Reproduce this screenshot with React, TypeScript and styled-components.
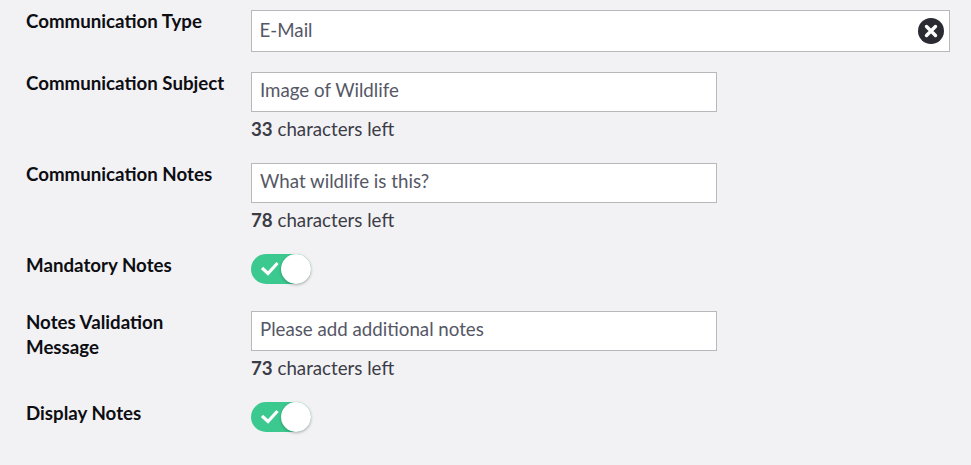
import * as React from 'react'
import styled, { createGlobalStyle } from 'styled-components'

const GlobalStyle = createGlobalStyle`
    html, body {
        margin: 0;
        padding: 0;
        background: #f2f2f5;
        font-family: Lato, "Open Sans", sans-serif;
    }
`;

const Form = styled.div`
    display: flex;
    flex-direction: column;
    gap: 20px;
    padding: 10px 21px 0 26px;
`;

const Row = styled.div`
    display: grid;
    grid-template-columns: 225px 1fr;
`;

const Label = styled.label`
    display: block;
    margin-top: -1px;
    font-size: 18.72px;
    line-height: 25px;
    font-weight: 700;
    color: #0d0d12;
`;

const SelectBox = styled.div`
    display: flex;
    align-items: center;
    justify-content: space-between;
    box-sizing: border-box;
    height: 42px;
    padding: 0 5px 2px 7.5px;
    border: 1px solid #b8b8bb;
    background: #fff;
    font-size: 18.72px;
    color: #555766;
`;

const ClearButton = styled.button`
    display: flex;
    margin-bottom: -2px;
    padding: 0;
    border: none;
    background: none;
`;

const TextInput = styled.input`
    display: block;
    box-sizing: border-box;
    width: 466px;
    height: 40px;
    padding: 0 8px 5px;
    border: 1px solid #b8b8bb;
    background: #fff;
    font-family: inherit;
    font-size: 18.72px;
    color: #555766;
    outline: none;
`;

const Hint = styled.div`
    height: 31px;
    font-size: 18.72px;
    line-height: 34px;
    color: #3c3c46;

    b {
        font-weight: 700;
    }
`;

const ToggleRow = styled.div`
    height: 37px;
`;

const Toggle = styled.div`
    position: relative;
    width: 60px;
    height: 30px;
    border-radius: 15px;
    background: #3cc98f;
`;

const Knob = styled.span`
    position: absolute;
    top: 0;
    right: 0;
    width: 30px;
    height: 30px;
    border-radius: 50%;
    background: #fff;
    box-shadow: 0 1px 3px rgba(0, 0, 0, 0.3);
`;

const Check = styled.svg`
    position: absolute;
    top: 7px;
    left: 10px;
    width: 18px;
    height: 15px;
`;

const Switch: React.FC = () => (
    <Toggle>
        <Check viewBox="0 0 18 15">
            <path d="M1 7 L7 12.5 L16.5 2" fill="none" stroke="#fff" strokeWidth="3.2" />
        </Check>
        <Knob />
    </Toggle>
);

const Field: React.FC<{ label: React.ReactNode; value: string; left: number }> = ({ label, value, left }) => (
    <Row>
        <Label>{label}</Label>
        <div>
            <TextInput readOnly value={value} />
            <Hint><b>{left}</b> characters left</Hint>
        </div>
    </Row>
);

export default function App() {
    return (
        <>
            <GlobalStyle />
            <Form>
                <Row>
                    <Label>Communication Type</Label>
                    <SelectBox>
                        E-Mail
                        <ClearButton>
                            <svg width="26" height="26" viewBox="0 0 26 26">
                                <circle cx="13" cy="13" r="13" fill="#2b2b33" />
                                <path d="M8.5 8.5 L17.5 17.5 M17.5 8.5 L8.5 17.5" stroke="#fff" strokeWidth="3.4" strokeLinecap="round" />
                            </svg>
                        </ClearButton>
                    </SelectBox>
                </Row>
                <Field label="Communication Subject" value="Image of Wildlife" left={33} />
                <Field label="Communication Notes" value="What wildlife is this?" left={78} />
                <Row>
                    <Label>Mandatory Notes</Label>
                    <ToggleRow><Switch /></ToggleRow>
                </Row>
                <Field label={<>Notes Validation<br />Message</>} value="Please add additional notes" left={73} />
                <Row>
                    <Label>Display Notes</Label>
                    <ToggleRow><Switch /></ToggleRow>
                </Row>
            </Form>
        </>
    )
}
